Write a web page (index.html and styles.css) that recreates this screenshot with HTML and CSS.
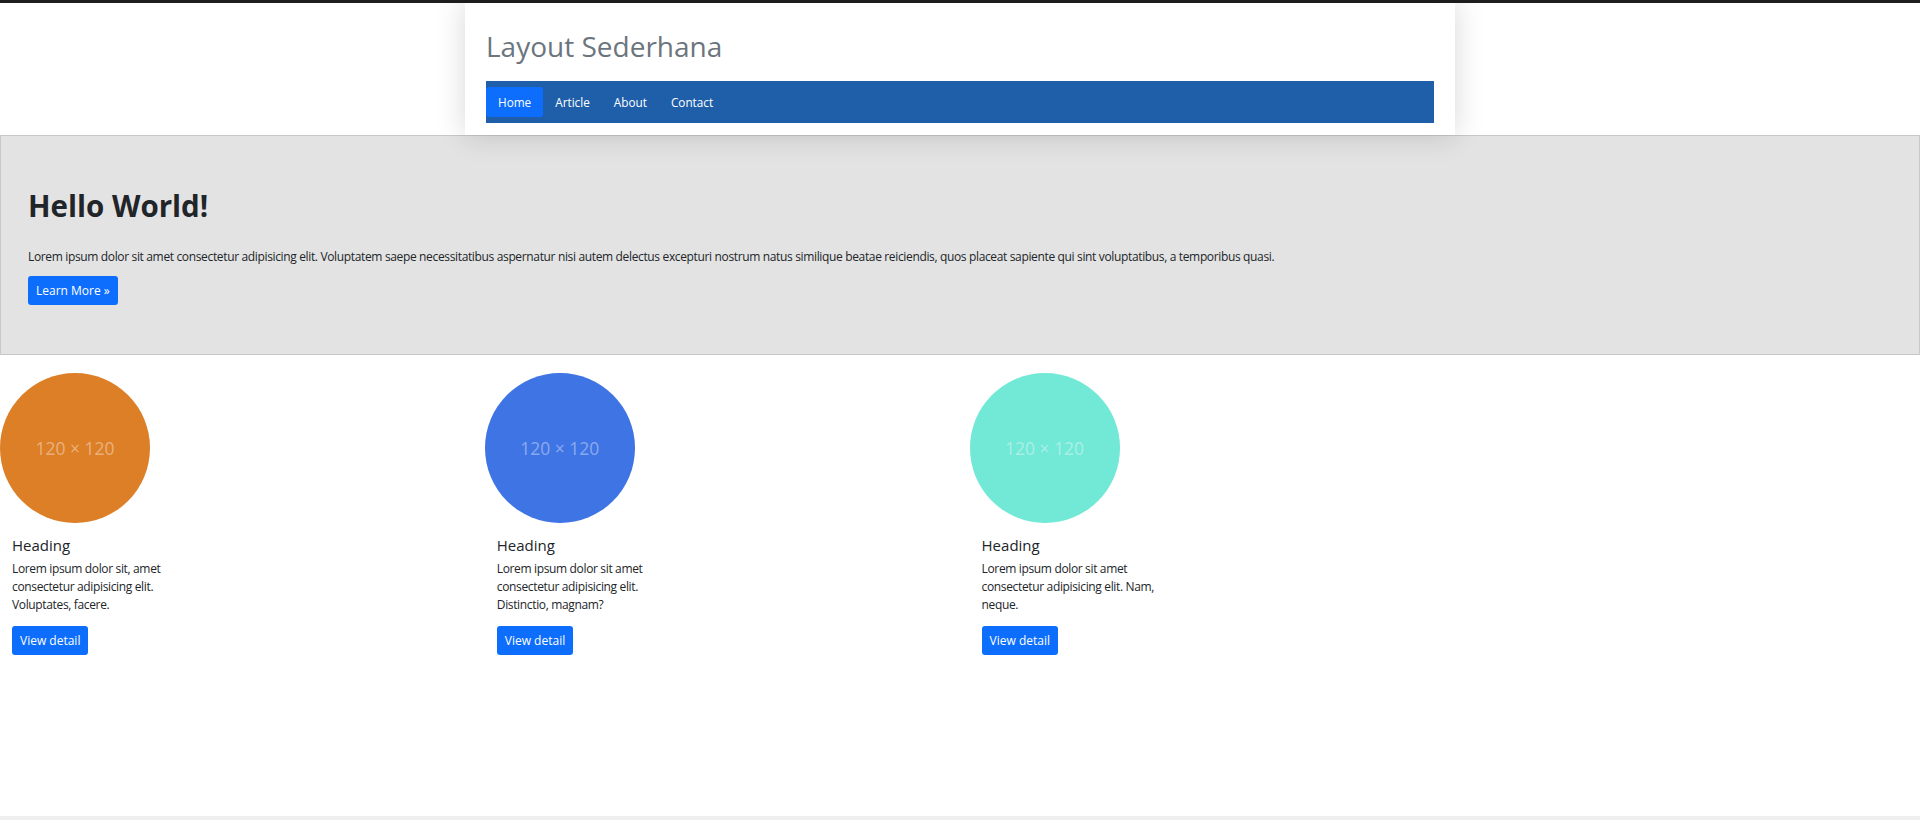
FILE: index.html
```html
<!DOCTYPE html>
<html lang="id">
<head>
<meta charset="utf-8">
<title>Layout Sederhana</title>
<link rel="stylesheet" href="styles.css">
</head>
<body>
<div class="page">
  <div class="topline"></div>
  <header class="site-header">
    <h1 class="site-title">Layout Sederhana</h1>
    <nav class="navbar">
      <a class="nav-link active" href="#">Home</a>
      <a class="nav-link" href="#">Article</a>
      <a class="nav-link" href="#">About</a>
      <a class="nav-link" href="#">Contact</a>
    </nav>
  </header>
  <main class="main">
    <section class="jumbotron">
      <h2 class="jumbo-title">Hello World!</h2>
      <p class="jumbo-text">Lorem ipsum dolor sit amet consectetur adipisicing elit. Voluptatem saepe necessitatibus aspernatur nisi autem delectus excepturi nostrum natus similique beatae reiciendis, quos placeat sapiente qui sint voluptatibus, a temporibus quasi.</p>
      <a class="btn btn-lg" href="#">Learn More &raquo;</a>
    </section>
    <section class="cards">
      <div class="card">
        <div class="thumb thumb-orange"><span>120 × 120</span></div>
        <div class="caption">
          <h3 class="card-title">Heading</h3>
          <p class="card-text">Lorem ipsum dolor sit, amet consectetur adipisicing elit. Voluptates, facere.</p>
          <a class="btn" href="#">View detail</a>
        </div>
      </div>
      <div class="card">
        <div class="thumb thumb-blue"><span>120 × 120</span></div>
        <div class="caption">
          <h3 class="card-title">Heading</h3>
          <p class="card-text">Lorem ipsum dolor sit amet consectetur adipisicing elit. Distinctio, magnam?</p>
          <a class="btn" href="#">View detail</a>
        </div>
      </div>
      <div class="card">
        <div class="thumb thumb-teal"><span>120 × 120</span></div>
        <div class="caption">
          <h3 class="card-title">Heading</h3>
          <p class="card-text">Lorem ipsum dolor sit amet consectetur adipisicing elit. Nam, neque.</p>
          <a class="btn" href="#">View detail</a>
        </div>
      </div>
    </section>
  </main>
  <footer class="footer"></footer>
</div>
</body>
</html>
```

FILE: styles.css
```css
* { box-sizing: border-box; }

html, body {
  margin: 0;
  padding: 0;
}

body {
  font-family: "Open Sans", "Noto Sans", "Liberation Sans", sans-serif;
  color: #212529;
  background: #fff;
  overflow-x: hidden;
}

.page {
  min-height: 100vh;
  display: flex;
  flex-direction: column;
}

.topline {
  height: 3px;
  background: #1e1e1e;
}

.site-header {
  width: 990px;
  margin: 0 auto;
  padding: 0 21px 12px;
  background: #fff;
  box-shadow: 0 0 28px rgba(0, 0, 0, 0.16);
  position: relative;
  z-index: 1;
}

.site-title {
  margin: 0;
  padding-top: 25px;
  height: 78px;
  font-size: 28px;
  line-height: 36px;
  font-weight: 400;
  color: #6c757d;
}

.navbar {
  display: flex;
  height: 42px;
  padding: 6px 0;
  background: #1f5faa;
}

.nav-link {
  display: block;
  height: 30px;
  padding: 1px 12px 0;
  line-height: 29px;
  font-size: 11.75px;
  color: #fff;
  text-decoration: none;
  border-radius: 3px;
}

.nav-link.active {
  background: #0d6efd;
}

.main {
  flex: 1;
}

.jumbotron {
  height: 220px;
  padding: 52px 27px 0;
  background: #e3e3e3;
  border: 1px solid #c8c8c8;
}

.jumbo-title {
  margin: 0;
  font-size: 29.5px;
  line-height: 36px;
  font-weight: 700;
  color: #212529;
}

.jumbo-text {
  margin: 24px 0 0;
  font-size: 12px;
  line-height: 18px;
  letter-spacing: -0.35px;
}

.btn {
  display: inline-block;
  padding: 0 8px;
  height: 29px;
  line-height: 29px;
  font-size: 12px;
  color: #fff;
  background: #0d6efd;
  border-radius: 3px;
  text-decoration: none;
}

.btn-lg {
  margin-top: 10px;
}

.cards {
  display: grid;
  grid-template-columns: repeat(4, 465.6px);
  column-gap: 19.2px;
  padding-top: 18px;
}

.thumb {
  width: 150px;
  height: 150px;
  border-radius: 50%;
  display: flex;
  align-items: center;
  justify-content: center;
}

.thumb span {
  font-size: 17.5px;
  color: rgba(255, 255, 255, 0.4);
}

.thumb-orange { background: #dc7f27; }
.thumb-blue { background: #3f74e4; }
.thumb-teal { background: #72e8d6; }

.caption {
  padding-left: 12px;
  width: 204px;
}

.card-title {
  margin: 11px 0 0;
  font-size: 15px;
  line-height: 22px;
  font-weight: 400;
}

.card-text {
  margin: 4px 0 0;
  font-size: 12px;
  line-height: 18px;
  letter-spacing: -0.35px;
}

.card .btn {
  margin-top: 12px;
}

.footer {
  height: 4px;
  background: #efefef;
}
```
